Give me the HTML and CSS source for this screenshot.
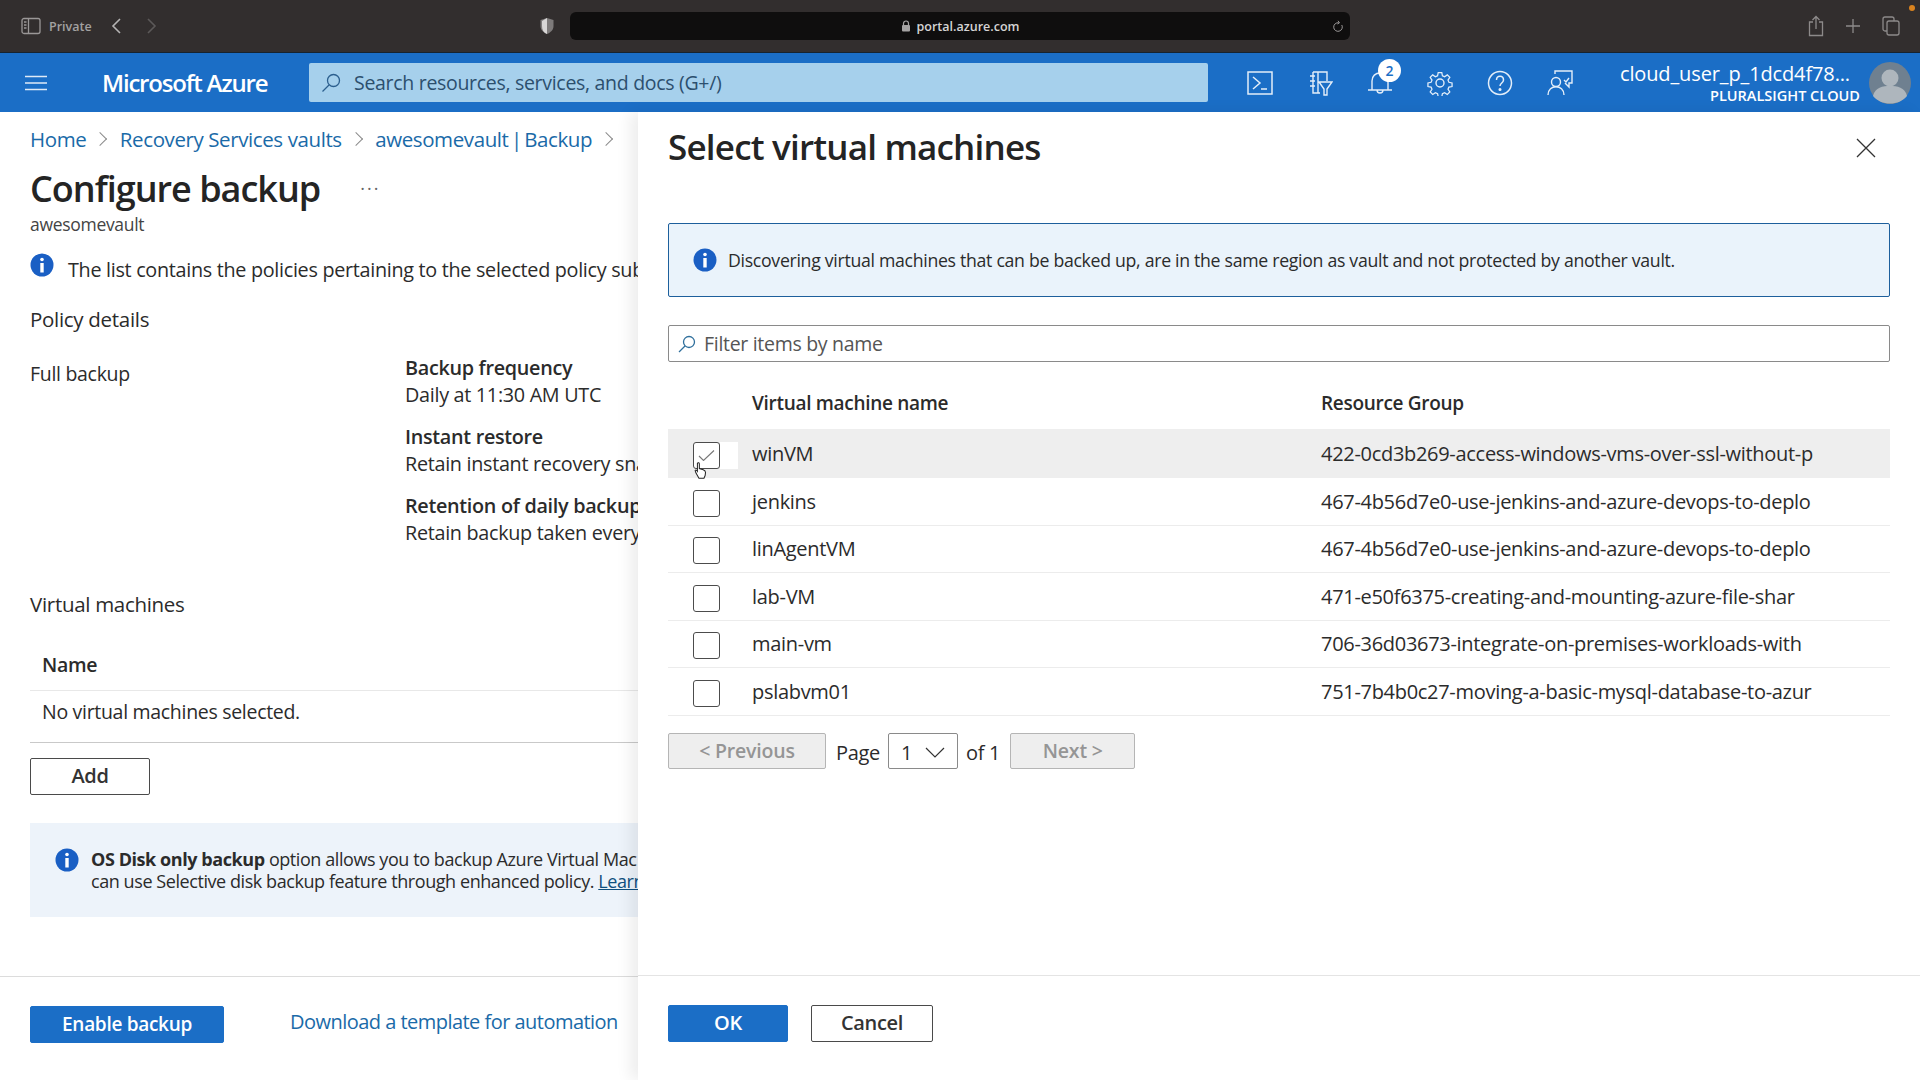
FILE: index.html
```html
<!DOCTYPE html>
<html lang="en">
<head>
    <meta charset="UTF-8">
    <title>Select virtual machines - Microsoft Azure</title>
    <link rel="stylesheet" href="styles.css">
</head>
<body>
    <div class="browser-bar">
        <div class="browser-left">
            <svg class="sidebar-icon" width="20" height="18" viewBox="0 0 20 18" fill="none" stroke="#9a9797" stroke-width="1.3"><rect x="1" y="1.5" width="18" height="15" rx="2"/><path d="M7.5 1.5v15M3 5h2.5M3 8h2.5M3 11h2.5"/></svg>
            <span class="private">Private</span>
            <svg width="12" height="18" viewBox="0 0 12 18" fill="none" stroke="#b5b3b3" stroke-width="1.6"><path d="M10 2L3 9l7 7"/></svg>
            <svg class="forward" width="12" height="18" viewBox="0 0 12 18" fill="none" stroke="#5c5959" stroke-width="1.6"><path d="M2 2l7 7-7 7"/></svg>
        </div>
        <svg class="shield" width="16" height="18" viewBox="0 0 16 18"><path d="M8 1l6.500 2v6c0 4-3 6.500-6.500 8-3.500-1.500-6.500-4-6.500-8V3z" fill="#7d7a7a"/><path d="M8 1v16c-3.500-1.500-5-4-5-8V4z" fill="#d8d6d6"/></svg>
        <div class="url-bar">
            <svg class="lock" width="10" height="12" viewBox="0 0 10 12" fill="#a5a3a3"><rect x="1" y="5" width="8" height="6.500" rx="1"/><path d="M2.500 5V3.500a2.500 2.500 0 0 1 5 0V5" fill="none" stroke="#a5a3a3" stroke-width="1.200"/></svg>
            <span>portal.azure.com</span>
            <svg class="reload" width="12" height="13" viewBox="0 0 12 13" fill="none" stroke="#9a9797" stroke-width="1"><path d="M9.800 5a4.300 4.300 0 1 1-3-2.200M6 .8l1.500 2L5.500 4"/></svg>
        </div>
        <div class="browser-right">
            <svg width="16" height="22" viewBox="0 0 16 22" fill="none" stroke="#8d8a8a" stroke-width="1.300"><path d="M5 7H1.500v13.500h13V7H11M8 14V1.500M4.500 5L8 1.500 11.500 5"/></svg>
            <svg width="16" height="16" viewBox="0 0 16 16" fill="none" stroke="#8d8a8a" stroke-width="1.300"><path d="M8 1v14M1 8h14"/></svg>
            <svg width="18" height="20" viewBox="0 0 18 20" fill="none" stroke="#8d8a8a" stroke-width="1.300"><rect x="5" y="5" width="12" height="14" rx="2"/><path d="M5 15H3a2 2 0 0 1-2-2V3a2 2 0 0 1 2-2h7a2 2 0 0 1 2 2v2"/></svg>
        </div>
        <span class="orange-dot"></span>
    </div>

    <header class="nav">
        <svg class="menu-icon" width="22" height="16" viewBox="0 0 22 16" stroke="#dfeaf7" stroke-width="1.500"><path d="M0 1.500h22M0 8h22M0 14.500h22"/></svg>
        <div class="brand">Microsoft Azure</div>
        <div class="search">
            <svg width="20" height="20" viewBox="0 0 20 20" fill="none" stroke="#2c5f8e" stroke-width="1.300"><circle cx="12.500" cy="7.500" r="6"/><path d="M8 12L1.500 18.500"/></svg>
            <span>Search resources, services, and docs (G+/)</span>
        </div>
        <div class="nav-icons">
            <svg width="26" height="24" viewBox="0 0 26 24" fill="none" stroke="#e4eef9" stroke-width="1.500"><rect x="1" y="1" width="24" height="22"/><path d="M6 6l7 6-7 6M14 18h6"/></svg>
            <svg width="26" height="26" viewBox="0 0 26 26" fill="none" stroke="#e4eef9" stroke-width="1.400"><path d="M6 2h14v9M6 2v21h7M3 6h5M3 11h5M3 16h5M11 2v21M12 12h13l-5 7v6h-3v-6z"/></svg>
            <div class="bell">
                <svg width="26" height="28" viewBox="0 0 26 28" fill="none" stroke="#e4eef9" stroke-width="1.400"><path d="M5 21V12c0-5 3.500-8 8-8s8 3 8 8v9M1 21h24M10 21c0 4 6 4 6 0"/></svg>
                <span class="badge">2</span>
            </div>
            <svg width="26" height="26" viewBox="0 0 26 26" fill="none" stroke="#e4eef9" stroke-width="1.400"><circle cx="13" cy="13" r="4"/><path d="M11 1.500h4l.7 3.500 2.400 1 3-2 2.800 2.800-2 3 1 2.400 3.500.7v4l-3.500.7-1 2.400 2 3-2.800 2.800-3-2-2.400 1-.7 3.500h-4l-.7-3.500-2.400-1-3 2-2.800-2.800 2-3-1-2.400-3.500-.7v-4l3.500-.7 1-2.400-2-3 2.800-2.800 3 2 2.400-1z" transform="translate(1.300 1.300) scale(.9)"/></svg>
            <svg width="26" height="26" viewBox="0 0 26 26" fill="none" stroke="#e4eef9" stroke-width="1.500"><circle cx="13" cy="13" r="11.500"/><path d="M9.500 10c0-5 7-5 7 0 0 3-3.500 3-3.500 6"/><circle cx="13" cy="19.500" r=".8" fill="#e4eef9"/></svg>
            <svg width="26" height="26" viewBox="0 0 26 26" fill="none" stroke="#e4eef9" stroke-width="1.400"><path d="M8 4V1h17v12h-3v4l-4-4"/><circle cx="9" cy="12" r="4.500"/><path d="M1 25c0-11 16-11 16 0M17 10l2 2 3-4"/></svg>
        </div>
        <div class="account">
            <div class="account-name">cloud_user_p_1dcd4f78...</div>
            <div class="account-org">PLURALSIGHT CLOUD</div>
        </div>
        <div class="avatar">
            <svg width="42" height="42" viewBox="0 0 42 42"><circle cx="21" cy="21" r="21" fill="#6f8090"/><circle cx="21" cy="16" r="8.500" fill="#aeb6bd"/><path d="M4 34c2-9 10-10 17-10s15 1 17 10c-8 10-26 10-34 0z" fill="#aeb6bd"/></svg>
        </div>
    </header>

    <main class="workspace">
        <section class="blade">
            <div class="blade-body">
                <nav class="breadcrumb">
                    <a>Home</a><i class="crumb-sep"></i>
                    <a>Recovery Services vaults</a><i class="crumb-sep"></i>
                    <a class="crumb-vault">awesomevault | Backup</a><i class="crumb-sep"></i>
                </nav>
                <div class="title-row">
                    <h1>Configure backup</h1>
                    <span class="more">...</span>
                </div>
                <div class="subtitle">awesomevault</div>
                <div class="policy-note">
                    <svg class="info-icon" width="24" height="24" viewBox="0 0 24 24"><circle cx="12" cy="12" r="11.500" fill="#1a5fc4"/><circle cx="12" cy="6.500" r="1.800" fill="#fff"/><rect x="10.300" y="10" width="3.400" height="9.500" fill="#fff"/></svg>
                    <span>The list contains the policies pertaining to the selected policy sub</span>
                </div>
                <h2 class="section-head policy-head">Policy details</h2>
                <div class="policy-grid">
                    <div class="full-backup">Full backup</div>
                    <div class="policy-info">
                        <b>Backup frequency</b>
                        <p>Daily at 11:30 AM UTC</p>
                        <b>Instant restore</b>
                        <p>Retain instant recovery sna</p>
                        <b>Retention of daily backup</b>
                        <p>Retain backup taken every</p>
                    </div>
                </div>
                <h2 class="section-head vm-head">Virtual machines</h2>
                <div class="vm-table-head">Name</div>
                <div class="vm-empty">No virtual machines selected.</div>
                <button class="btn add-btn">Add</button>
                <div class="os-note">
                    <svg class="info-icon" width="24" height="24" viewBox="0 0 24 24"><circle cx="12" cy="12" r="11.500" fill="#1a5fc4"/><circle cx="12" cy="6.500" r="1.800" fill="#fff"/><rect x="10.300" y="10" width="3.400" height="9.500" fill="#fff"/></svg>
                    <div>
                        <div><b>OS Disk only backup</b> option allows you to backup Azure Virtual Mac</div>
                        <div>can use Selective disk backup feature through enhanced policy. <a>Learn</a></div>
                    </div>
                </div>
            </div>
            <footer class="blade-footer">
                <button class="btn btn-primary enable-btn">Enable backup</button>
                <a class="template-link">Download a template for automation</a>
            </footer>
        </section>

        <section class="panel">
            <div class="panel-body">
                <div class="panel-head">
                    <h1>Select virtual machines</h1>
                    <svg class="close" width="20" height="20" viewBox="0 0 20 20" stroke="#333" stroke-width="1.300"><path d="M1 1l18 18M19 1L1 19"/></svg>
                </div>
                <div class="discover-note">
                    <svg class="info-icon" width="24" height="24" viewBox="0 0 24 24"><circle cx="12" cy="12" r="11.500" fill="#1a5fc4"/><circle cx="12" cy="6.500" r="1.800" fill="#fff"/><rect x="10.300" y="10" width="3.400" height="9.500" fill="#fff"/></svg>
                    <span>Discovering virtual machines that can be backed up, are in the same region as vault and not protected by another vault.</span>
                </div>
                <div class="filter">
                    <svg width="20" height="20" viewBox="0 0 20 20" fill="none" stroke="#2f6f9c" stroke-width="1.300"><circle cx="12" cy="8" r="5.500"/><path d="M8 12l-6 6"/></svg>
                    <span>Filter items by name</span>
                </div>
                <div class="vm-row vm-header">
                    <span></span>
                    <span>Virtual machine name</span>
                    <span>Resource Group</span>
                </div>
                <div class="vm-row selected">
                    <span class="check-cell">
                        <span class="check"><svg width="17" height="11" viewBox="0 0 17 11" fill="none" stroke="#777" stroke-width="1.100"><path d="M1 6l4.500 4.500L16 .5"/></svg></span>
                        <svg class="hand" width="15" height="17" viewBox="0 0 16 22"><path d="M4 1.500c1-1 2.500-.5 2.500 1v6l5 1.500c2 .8 3 1.500 3 3.500l-.5 4-1.500 3.500H6l-4-7-1-3c1-1 2-.5 3 1z" fill="#fff" stroke="#222" stroke-width="1.300"/></svg>
                    </span>
                    <span>winVM</span>
                    <span>422-0cd3b269-access-windows-vms-over-ssl-without-p</span>
                </div>
                <div class="vm-row">
                    <span class="check-cell"><span class="check"></span></span>
                    <span>jenkins</span>
                    <span>467-4b56d7e0-use-jenkins-and-azure-devops-to-deplo</span>
                </div>
                <div class="vm-row">
                    <span class="check-cell"><span class="check"></span></span>
                    <span>linAgentVM</span>
                    <span>467-4b56d7e0-use-jenkins-and-azure-devops-to-deplo</span>
                </div>
                <div class="vm-row">
                    <span class="check-cell"><span class="check"></span></span>
                    <span>lab-VM</span>
                    <span>471-e50f6375-creating-and-mounting-azure-file-shar</span>
                </div>
                <div class="vm-row">
                    <span class="check-cell"><span class="check"></span></span>
                    <span>main-vm</span>
                    <span>706-36d03673-integrate-on-premises-workloads-with</span>
                </div>
                <div class="vm-row">
                    <span class="check-cell"><span class="check"></span></span>
                    <span>pslabvm01</span>
                    <span>751-7b4b0c27-moving-a-basic-mysql-database-to-azur</span>
                </div>
                <div class="pager">
                    <button class="page-btn prev-btn">&lt; Previous</button>
                    <span>Page</span>
                    <div class="page-select">
                        <span>1</span>
                        <svg width="20" height="11" viewBox="0 0 20 11" fill="none" stroke="#333" stroke-width="1.200"><path d="M1 1l9 9 9-9"/></svg>
                    </div>
                    <span>of 1</span>
                    <button class="page-btn next-btn">Next &gt;</button>
                </div>
            </div>
            <footer class="panel-footer">
                <button class="btn btn-primary ok-btn">OK</button>
                <button class="btn cancel-btn">Cancel</button>
            </footer>
        </section>
    </main>
</body>
</html>
```

FILE: styles.css
```css
* {
    box-sizing: border-box;
}
html, body {
    margin: 0;
    height: 100%;
}
body {
    width: 1920px;
    height: 1080px;
    overflow: hidden;
    display: flex;
    flex-direction: column;
    font-family: "Open Sans", "Liberation Sans", sans-serif;
    color: #2b2b2b;
    background: #fff;
}
h1, h2, p {
    margin: 0;
}
button {
    font-family: inherit;
}

/* browser chrome */
.browser-bar {
    position: relative;
    height: 53px;
    flex: none;
    display: flex;
    align-items: center;
    background: #322e2e;
    border-bottom: 1px solid #16232f;
}
.browser-left {
    width: 539px;
    padding-left: 21px;
    display: flex;
    align-items: center;
}
.private {
    margin: 0 0 0 8px;
    font-size: 12.500px;
    font-weight: 600;
    color: #a3a1a1;
}
.browser-left svg:nth-of-type(2) {
    margin-left: 18px;
}
.forward {
    margin-left: 24px;
}
.shield {
    flex: none;
}
.url-bar {
    position: relative;
    width: 780px;
    height: 28px;
    margin-left: 15px;
    display: flex;
    align-items: center;
    justify-content: center;
    gap: 6px;
    background: #0f0e0e;
    border-radius: 6px;
    font-size: 12.500px;
    font-weight: 600;
    color: #d5d4d4;
}
.reload {
    position: absolute;
    right: 6px;
    top: 8px;
}
.browser-right {
    margin-left: auto;
    padding-right: 20px;
    display: flex;
    align-items: center;
    gap: 21px;
}
.orange-dot {
    position: absolute;
    top: 5px;
    right: 5px;
    width: 6px;
    height: 6px;
    border-radius: 50%;
    background: #d9831f;
}

/* azure top bar */
.nav {
    height: 59px;
    flex: none;
    display: flex;
    align-items: center;
    background: #1b6ec6;
    color: #fff;
}
.menu-icon {
    margin-left: 25px;
    flex: none;
}
.brand {
    width: 207px;
    margin-left: 55px;
    font-size: 24px;
    font-weight: 600;
    letter-spacing: -1.200px;
    white-space: nowrap;
}
.search {
    width: 899px;
    height: 39px;
    display: flex;
    align-items: center;
    gap: 13px;
    padding-left: 12px;
    background: #a6d0ec;
    border-radius: 2px;
    font-size: 19.500px;
    letter-spacing: -0.300px;
    color: #2c4f6e;
}
.nav-icons {
    width: 326px;
    margin-left: 39px;
    display: flex;
    align-items: center;
    gap: 34px;
}
.nav-icons > * {
    flex: none;
}
.bell {
    position: relative;
    height: 28px;
}
.badge {
    position: absolute;
    top: -10px;
    left: 11px;
    width: 23px;
    height: 23px;
    border-radius: 50%;
    background: #fff;
    color: #1b6ec6;
    font-size: 14px;
    font-weight: 600;
    line-height: 23px;
    text-align: center;
}
.account {
    flex: 1;
    text-align: right;
    white-space: nowrap;
}
.account-name {
    margin-top: 2px;
    font-size: 20px;
    line-height: 26px;
    letter-spacing: -0.130px;
    padding-right: 10px;
}
.account-org {
    margin-top: -1px;
    font-size: 14.500px;
    font-weight: 600;
    line-height: 20px;
}
.avatar {
    width: 42px;
    height: 42px;
    margin: 0 9px;
    flex: none;
}

/* main area */
.workspace {
    flex: 1;
    display: flex;
    min-height: 0;
}
.blade {
    width: 638px;
    flex: none;
    display: flex;
    flex-direction: column;
    overflow: hidden;
}
.blade-body {
    flex: 1;
    padding: 13px 0 0 30px;
    white-space: nowrap;
    font-size: 19.500px;
    letter-spacing: -0.300px;
}
.breadcrumb {
    height: 28px;
    display: flex;
    align-items: center;
    font-size: 20.500px;
    letter-spacing: -0.400px;
    color: #1a6aa8;
}
.crumb-sep {
    width: 10px;
    height: 10px;
    margin: 0 14.500px 0 9px;
    border-top: 1.300px solid #8b8b8b;
    border-right: 1.300px solid #8b8b8b;
    transform: rotate(45deg);
}
.crumb-vault {
    word-spacing: -2.500px;
}
.title-row {
    height: 48px;
    margin-top: 11px;
    display: flex;
    align-items: center;
}
.title-row h1 {
    font-size: 36px;
    font-weight: 600;
    letter-spacing: -1px;
    color: #242424;
}
.more {
    margin: -10px 0 0 40px;
    font-size: 18px;
    letter-spacing: 2px;
    color: #666;
}
.subtitle {
    font-size: 17.500px;
    line-height: 24px;
    color: #444;
}
.policy-note {
    margin-top: 19px;
    display: flex;
    align-items: center;
    gap: 14px;
    height: 28px;
    font-size: 19.800px;
}
.policy-note .info-icon {
    flex: none;
    margin-top: -8px;
}
.section-head {
    font-size: 20.500px;
    font-weight: 400;
    line-height: 28px;
    letter-spacing: -0.300px;
}
.policy-head {
    margin-top: 22px;
}
.policy-grid {
    display: flex;
    margin-top: 21px;
}
.full-backup {
    width: 375px;
    flex: none;
    padding-top: 6px;
}
.policy-info {
    font-size: 19.800px;
    line-height: 27px;
}
.policy-info b {
    display: block;
    font-weight: 600;
}
.policy-info p {
    margin-bottom: 15px;
}
.vm-head {
    margin-top: 29px;
}
.vm-table-head {
    height: 45px;
    margin: 27px 0 0 12px;
    padding-top: 6px;
    font-weight: 600;
    line-height: 28px;
}
.vm-empty {
    height: 53px;
    padding: 7px 0 0 12px;
    line-height: 28px;
    border-top: 1px solid #e8e8e8;
    border-bottom: 1px solid #c9c9c9;
}
.btn {
    height: 37px;
    padding-bottom: 3px;
    background: #fff;
    border: 1px solid #4a4a4a;
    border-radius: 2px;
    font-size: 20px;
    font-weight: 600;
    letter-spacing: -0.300px;
    color: #333;
}
.add-btn {
    display: block;
    width: 120px;
    margin-top: 15px;
}
.os-note {
    height: 94px;
    margin-top: 28px;
    padding: 25px 0 0 25px;
    display: flex;
    gap: 12px;
    background: #edf3fa;
    font-size: 18px;
    line-height: 22px;
    letter-spacing: -0.430px;
}
.os-note b {
    font-weight: 700;
}
.os-note a {
    color: #0f4f7f;
    text-decoration: underline;
}
.os-note .info-icon {
    flex: none;
}
.blade-footer {
    height: 104px;
    flex: none;
    padding: 29px 0 0 30px;
    display: flex;
    align-items: flex-start;
    border-top: 1px solid #dcdcdc;
}
.btn-primary {
    background: #1b6ec6;
    border-color: #1b6ec6;
    color: #fff;
}
.enable-btn {
    width: 194px;
    font-size: 19px;
}
.template-link {
    margin: 2px 0 0 66px;
    font-size: 20px;
    line-height: 28px;
    letter-spacing: -0.530px;
    white-space: nowrap;
    color: #1a6aa8;
}

/* right hand panel */
.panel {
    flex: 1;
    display: flex;
    flex-direction: column;
    background: #fff;
    box-shadow: -8px 0 14px rgba(0, 0, 0, 0.07);
    z-index: 1;
}
.panel-body {
    flex: 1;
    padding: 0 30px;
    font-size: 20px;
    letter-spacing: -0.300px;
}
.panel-head {
    height: 111px;
    display: flex;
    justify-content: space-between;
    align-items: flex-start;
}
.panel-head h1 {
    margin-top: 11px;
    font-size: 35px;
    line-height: 48px;
    font-weight: 600;
    letter-spacing: -0.800px;
    color: #242424;
}
.close {
    margin: 26px 14px 0 0;
}
.discover-note {
    height: 74px;
    display: flex;
    align-items: center;
    gap: 11px;
    padding-left: 24px;
    background: #eaf3fb;
    border: 1px solid #1d5f9c;
    border-radius: 2px;
    font-size: 17.700px;
    letter-spacing: -0.300px;
}
.filter {
    height: 37px;
    margin-top: 28px;
    display: flex;
    align-items: center;
    gap: 7px;
    padding-left: 8px;
    border: 1px solid #8a8a8a;
    border-radius: 2px;
    font-size: 19.500px;
    color: #555;
}
.vm-row {
    height: 47.500px;
    display: grid;
    grid-template-columns: 84px 569px 1fr;
    align-items: center;
    border-bottom: 1px solid #ececec;
    white-space: nowrap;
}
.vm-header {
    height: 47px;
    margin-top: 20px;
    padding-bottom: 5px;
    font-size: 19px;
    font-weight: 600;
    border-bottom: 0;
}
.vm-row.selected {
    height: 49px;
    background: #eeeeee;
    border-bottom: 0;
}
.check-cell {
    position: relative;
    height: 100%;
    display: flex;
    align-items: center;
    padding: 4px 0 0 25px;
}
.check {
    width: 27px;
    height: 27px;
    display: flex;
    align-items: center;
    justify-content: center;
    background: #fff;
    border: 1px solid #4c4c4c;
    border-radius: 3px;
}
.selected .check-cell::after {
    content: "";
    position: absolute;
    left: 52px;
    top: 13px;
    width: 18px;
    height: 27px;
    background: #fff;
}
.hand {
    position: absolute;
    left: 25px;
    top: 33px;
    z-index: 1;
}
.pager {
    margin-top: 17px;
    display: flex;
    align-items: center;
    gap: 10px;
}
.pager > span {
    padding-top: 3px;
}
.page-btn {
    height: 36px;
    padding-bottom: 2px;
    background: #eeeeee;
    border: 1px solid #b5b5b5;
    border-radius: 2px;
    font-size: 19.500px;
    font-weight: 600;
    letter-spacing: -0.200px;
    color: #959595;
}
.prev-btn {
    width: 158px;
}
.next-btn {
    width: 125px;
}
.page-select {
    width: 70px;
    height: 36px;
    margin: 0 -2px;
    display: flex;
    align-items: center;
    justify-content: space-between;
    padding: 3px 12px 0;
    border: 1px solid #8a8a8a;
    border-radius: 2px;
}
.panel-footer {
    height: 105px;
    flex: none;
    padding: 29px 0 0 30px;
    display: flex;
    align-items: flex-start;
    gap: 23px;
    border-top: 1px solid #e4e4e4;
}
.ok-btn {
    width: 120px;
}
.cancel-btn {
    width: 122px;
}
```
